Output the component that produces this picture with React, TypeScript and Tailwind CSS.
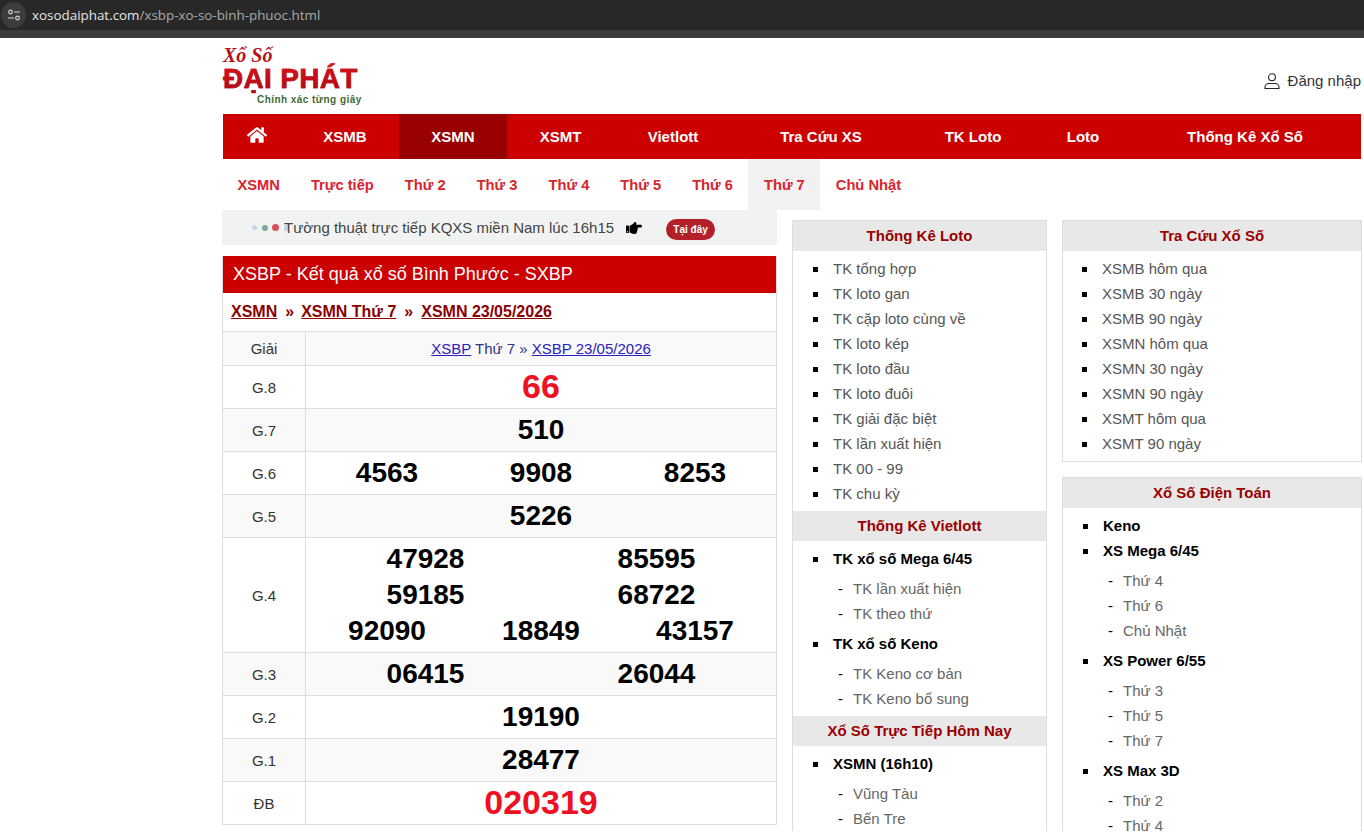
import { FaHome, FaHandPointRight } from 'react-icons/fa'

const mainNav = [
  { label: 'XSMB', width: 'w-[108px]' },
  { label: 'XSMN', width: 'w-[108px]', active: true },
  { label: 'XSMT', width: 'w-[107px]' },
  { label: 'Vietlott', width: 'w-[118px]' },
  { label: 'Tra Cứu XS', width: 'w-[178px]' },
  { label: 'TK Loto', width: 'w-[126px]' },
  { label: 'Loto', width: 'w-[94px]' },
  { label: 'Thống Kê Xổ Số', width: 'w-[230px]' },
]

const subNav = ['XSMN', 'Trực tiếp', 'Thứ 2', 'Thứ 3', 'Thứ 4', 'Thứ 5', 'Thứ 6', 'Thứ 7', 'Chủ Nhật']

const prizes = [
  { name: 'G.7', rows: [['510']] },
  { name: 'G.6', rows: [['4563', '9908', '8253']] },
  { name: 'G.5', rows: [['5226']] },
  { name: 'G.4', rows: [['47928', '85595'], ['59185', '68722'], ['92090', '18849', '43157']] },
  { name: 'G.3', rows: [['06415', '26044']] },
  { name: 'G.2', rows: [['19190']] },
  { name: 'G.1', rows: [['28477']] },
]

function PrizeRow({ name, shaded, tall, children }: { name: string; shaded?: boolean; tall?: boolean; children: React.ReactNode }) {
  return (
    <div className={`flex border-b border-[#ddd] ${tall ? 'h-[115px]' : 'h-[43px]'} ${shaded ? 'bg-[#f9f9f9]' : 'bg-white'}`}>
      <div className="flex w-[83px] shrink-0 items-center justify-center border-r border-[#ddd] pt-[2px] text-[15px] text-[#333]">{name}</div>
      <div className="flex flex-1 flex-col items-center justify-center">{children}</div>
    </div>
  )
}

function Numbers({ values }: { values: string[] }) {
  const cols = values.length === 3 ? 'grid-cols-3' : values.length === 2 ? 'grid-cols-2' : 'grid-cols-1'
  return (
    <div className={`grid w-[462px] ${cols} text-center text-[28px] leading-[36px] font-bold text-black`}>
      {values.map((v) => (
        <span key={v}>{v}</span>
      ))}
    </div>
  )
}

function CardHeader({ title }: { title: string }) {
  return <div className="flex h-[30px] items-center justify-center bg-[#e8e8e8] text-[15px] font-bold text-[#990000]">{title}</div>
}

function Item({ children, pad }: { children: React.ReactNode; pad: string }) {
  return (
    <div className={`flex h-[25px] items-center ${pad} text-[15px] text-[#555]`}>
      <span className="mr-[15px] h-[5px] w-[5px] shrink-0 bg-black" />
      {children}
    </div>
  )
}

function Group({ title, subs, pad, subPad }: { title: string; subs?: string[]; pad: string; subPad: string }) {
  return (
    <div className="mb-[5px]">
      <div className={`flex h-[25px] items-center ${pad} text-[15px] font-bold text-black`}>
        <span className="mr-[15px] h-[5px] w-[5px] shrink-0 bg-black" />
        {title}
      </div>
      {subs && (
        <div className="mt-[5px]">
          {subs.map((s) => (
            <div key={s} className={`flex h-[25px] items-center ${subPad} text-[15px] text-[#666]`}>
              <span className="mr-[10px] w-[5px] text-black">-</span>
              {s}
            </div>
          ))}
        </div>
      )}
    </div>
  )
}

export default function App() {
  return (
    <div className="h-[839px] overflow-hidden bg-white font-['Liberation_Sans',Arial,sans-serif]">
      <div className="h-[831px] overflow-hidden">
        {/* browser chrome */}
        <div className="flex h-[30px] items-center bg-[#282828] font-['Open_Sans',sans-serif] text-[13.4px]">
          <div className="ml-[1px] flex h-[26px] w-[25px] items-center justify-center rounded-full bg-[#3c3c3c]">
            <svg width="14" height="12" viewBox="0 0 14 12" fill="none" stroke="#d5d5d5" strokeWidth="1.2">
              <circle cx="3.5" cy="3" r="1.8" />
              <path d="M7 3h6M1 9h6" />
              <circle cx="10.5" cy="9" r="1.8" />
            </svg>
          </div>
          <span className="ml-[6px] text-[#e6e6e6]">xosodaiphat.com</span>
          <span className="text-[#a8a8a8]">/xsbp-xo-so-binh-phuoc.html</span>
        </div>
        <div className="h-[8px] bg-[#3b3b3b]" />

        <div className="ml-[222px] w-[1140px]">
          {/* logo + login */}
          <div className="flex h-[76px] items-center justify-between">
            <div className="flex h-[76px] flex-col pl-px">
              <span className="mt-[10px] h-[14px] font-['Liberation_Serif',serif] text-[20px] leading-[14px] font-bold text-[#b5121b] italic">Xổ Số</span>
              <span className="h-[31px] bg-gradient-to-b from-[#e0101c] to-[#a80d14] bg-clip-text pt-[3px] text-[28px] leading-[27px] font-bold tracking-[0.3px] text-transparent [-webkit-text-stroke:0.5px_#c4101a]">ĐẠI PHÁT</span>
              <span className="ml-[34px] text-[10px] leading-[14px] font-bold tracking-[0.45px] text-[#3f6b35]">Chính xác từng giây</span>
            </div>
            <div className="mt-[10px] flex items-center pr-px text-[15px] text-[#333]">
              <svg className="mr-[8px] -ml-px" width="16" height="16" viewBox="0 0 16 16" fill="none" stroke="#222" strokeWidth="1.1">
                <circle cx="8" cy="4.2" r="3.4" />
                <path d="M1 15.5v-1.2c0-2.4 2-3.8 3.8-3.8h6.4c1.8 0 3.8 1.4 3.8 3.8v1.2z" />
              </svg>
              Đăng nhập
            </div>
          </div>

          {/* main nav */}
          <div className="ml-px flex h-[45px] w-[1138px] bg-[#cc0000] text-[15px] font-bold text-white">
            <div className="flex w-[68px] items-center pl-[24px]">
              <FaHome className="-mt-[3px] text-[20px]" />
            </div>
            {mainNav.map((n) => (
              <div key={n.label} className={`flex items-center justify-center pt-[2px] ${n.width} ${n.active ? 'bg-[#990000]' : ''}`}>
                {n.label}
              </div>
            ))}
          </div>

          {/* sub nav */}
          <div className="flex h-[51px] text-[14.7px] font-bold text-[#d9232d]">
            {subNav.map((s) => (
              <div key={s} className={`flex items-center px-[15.5px] pt-[2px] ${s === 'Thứ 7' ? 'bg-[#f1f1f1]' : ''}`}>
                {s}
              </div>
            ))}
          </div>

          <div className="flex items-start">
            {/* main column */}
            <div className="w-[555px] shrink-0">
              <div className="flex h-[35px] items-center bg-[#f1f3f3] pl-[30px] text-[15px] text-[#444]">
                <span className="h-[5px] w-[5px] rounded-full bg-[#c5d5e5]" />
                <span className="ml-[5px] h-[6px] w-[6px] rounded-full bg-[#7fa8a0]" />
                <span className="ml-[4px] h-[7px] w-[7px] rounded-full bg-[#d8505a]" />
                <span className="ml-[5px] h-[6px] w-[4px] rounded-full bg-[#c5d5e5]" />
                <span className="-ml-[4px] pt-px">Tường thuật trực tiếp KQXS miền Nam lúc 16h15</span>
                <FaHandPointRight className="ml-[12px] text-[16px] text-black" />
                <span className="mt-[4px] ml-[24px] flex h-[21px] w-[49px] items-center justify-center rounded-full bg-[#b3202a] text-[10px] font-bold text-white">Tại đây</span>
              </div>

              <div className="mt-[11px] border-x border-[#ddd]">
                <div className="flex h-[37px] items-center bg-[#cc0000] pl-[10px] text-[18px] text-white">XSBP - Kết quả xổ số Bình Phước - SXBP</div>
                <div className="flex h-[38px] items-center pl-[8px] text-[16px] font-bold text-[#8b0000]">
                  <span className="underline">XSMN</span>
                  <span className="mr-[7px] ml-[8px]">»</span>
                  <span className="underline">XSMN Thứ 7</span>
                  <span className="mx-[8px]">»</span>
                  <span className="underline">XSMN 23/05/2026</span>
                </div>

                <div className="border-t border-[#ddd]">
                  <div className="flex h-[34px] border-b border-[#ddd] bg-[#f9f9f9]">
                    <div className="flex w-[83px] shrink-0 items-center justify-center border-r border-[#ddd] pt-[2px] text-[15px] text-[#333]">Giải</div>
                    <div className="flex flex-1 items-center justify-center pt-[2px] text-[15px] text-[#33338f]">
                      <span className="text-[#2a20bf] underline">XSBP</span>
                      <span className="whitespace-pre"> Thứ 7 » </span>
                      <span className="text-[#2a20bf] underline">XSBP 23/05/2026</span>
                    </div>
                  </div>
                  <PrizeRow name="G.8">
                    <span className="-mt-[2px] text-[34px] leading-[36px] font-bold text-[#ee1023]">66</span>
                  </PrizeRow>
                  {prizes.map((p, i) => (
                    <PrizeRow key={p.name} name={p.name} shaded={i % 2 === 0} tall={p.rows.length > 1}>
                      {p.rows.map((r) => (
                        <Numbers key={r[0]} values={r} />
                      ))}
                    </PrizeRow>
                  ))}
                  <PrizeRow name="ĐB">
                    <span className="-mt-[2px] text-[34px] leading-[36px] font-bold text-[#ee1023]">020319</span>
                  </PrizeRow>
                </div>
              </div>
            </div>

            {/* middle sidebar */}
            <div className="mt-[10px] ml-[15px] w-[255px] shrink-0 border border-b-0 border-[#ddd]">
              <CardHeader title="Thống Kê Loto" />
              <div className="pt-[6px] pb-[4px]">
                {['TK tổng hợp', 'TK loto gan', 'TK cặp loto cùng về', 'TK loto kép', 'TK loto đầu', 'TK loto đuôi', 'TK giải đặc biệt', 'TK lần xuất hiện', 'TK 00 - 99', 'TK chu kỳ'].map((t) => (
                  <Item key={t} pad="pl-[20px]">{t}</Item>
                ))}
              </div>
              <CardHeader title="Thống Kê Vietlott" />
              <div className="-mb-px pt-[6px]">
                <Group pad="pl-[20px]" subPad="pl-[45px]" title="TK xổ số Mega 6/45" subs={['TK lần xuất hiện', 'TK theo thứ']} />
                <Group pad="pl-[20px]" subPad="pl-[45px]" title="TK xổ số Keno" subs={['TK Keno cơ bản', 'TK Keno bổ sung']} />
              </div>
              <CardHeader title="Xổ Số Trực Tiếp Hôm Nay" />
              <div className="pt-[6px]">
                <Group pad="pl-[20px]" subPad="pl-[45px]" title="XSMN (16h10)" subs={['Vũng Tàu', 'Bến Tre']} />
              </div>
            </div>

            {/* right sidebar */}
            <div className="mt-[10px] ml-[15px] w-[300px] shrink-0">
              <div className="border border-[#ddd]">
                <CardHeader title="Tra Cứu Xổ Số" />
                <div className="pt-[6px] pb-[4px]">
                  {['XSMB hôm qua', 'XSMB 30 ngày', 'XSMB 90 ngày', 'XSMN hôm qua', 'XSMN 30 ngày', 'XSMN 90 ngày', 'XSMT hôm qua', 'XSMT 90 ngày'].map((t) => (
                    <Item key={t} pad="pl-[19px]">{t}</Item>
                  ))}
                </div>
              </div>
              <div className="mt-[15px] border border-b-0 border-[#ddd]">
                <CardHeader title="Xổ Số Điện Toán" />
                <div className="pt-[6px]">
                  <div className="-mb-[5px]">
                    <Group pad="pl-[20px]" subPad="pl-[45px]" title="Keno" />
                  </div>
                  <Group pad="pl-[20px]" subPad="pl-[45px]" title="XS Mega 6/45" subs={['Thứ 4', 'Thứ 6', 'Chủ Nhật']} />
                  <Group pad="pl-[20px]" subPad="pl-[45px]" title="XS Power 6/55" subs={['Thứ 3', 'Thứ 5', 'Thứ 7']} />
                  <Group pad="pl-[20px]" subPad="pl-[45px]" title="XS Max 3D" subs={['Thứ 2', 'Thứ 4']} />
                </div>
              </div>
            </div>
          </div>
        </div>
      </div>
    </div>
  )
}
